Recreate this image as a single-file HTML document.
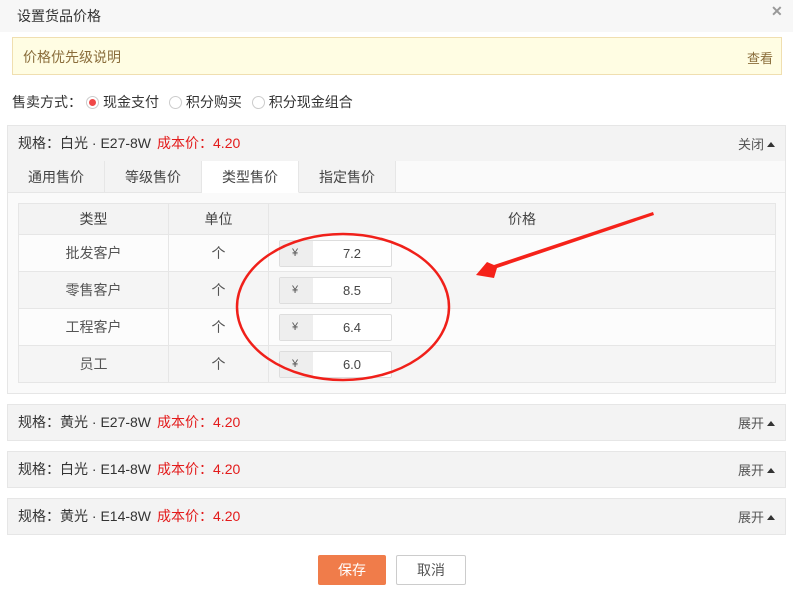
<!DOCTYPE html>
<html><head><meta charset="utf-8"><style>
*{margin:0;padding:0;box-sizing:border-box}
body{width:793px;height:592px;background:#fff;position:relative;overflow:hidden;font-family:"Liberation Sans","Noto Sans CJK SC",sans-serif;font-size:14px;color:#333}
.a{position:absolute}
.hdr{left:0;top:0;width:793px;height:32px;background:#f7f7f7}
.panel{left:7px;width:779px;border:1px solid #e6e6e6;background:#fafafa}
.ph{height:35px;background:#f3f3f3;line-height:35px;padding-left:10px;font-size:14px;color:#333;position:relative}
.ph .r{color:#e31b1b;margin-left:6px}
.ph .t{position:absolute;right:10px;top:1px;font-size:13px;color:#555}
.ph .t:after{content:"";display:inline-block;margin-left:3px;border-left:4px solid transparent;border-right:4px solid transparent;border-bottom:5px solid #333;vertical-align:2px}
.tab{top:161px;height:32px;width:97px;text-align:center;line-height:32px;font-size:14px;color:#444;border-right:1px solid #e6e6e6;border-bottom:1px solid #e6e6e6;background:#f3f3f3}
table{border-collapse:collapse;position:absolute;left:18px;top:203px;width:758px}
td,th{border:1px solid #e6e6e6;text-align:center;font-weight:normal;color:#555;font-size:14px}
th{height:31px;background:#f3f3f3;color:#444}
td{height:37px}
tr.o td{background:#fcfcfc}tr.e td{background:#f5f5f5}
.inp{display:inline-block;width:113px;height:27px;border:1px solid #ddd;border-radius:2px;background:#fff;position:relative;vertical-align:middle;text-align:left}
.inp span{position:absolute;left:0;top:0;width:33px;height:25px;background:#eee;line-height:25px;padding-left:12px;font-size:11px;color:#555}
.inp b{position:absolute;left:33px;right:0;top:0;line-height:25px;text-align:center;font-weight:normal;font-size:13px;color:#444}
.rad{display:inline-block;width:13px;height:13px;border:1px solid #ccc;border-radius:50%;vertical-align:-2px;margin:0 4px 0 6px;background:#fff;position:relative}
</style></head><body>
<div class="a hdr"></div>
<div class="a" style="left:17px;top:6px;font-size:14px;color:#333">设置货品价格</div>
<div class="a" style="left:771px;top:3px;font-size:14px;color:#999;font-weight:bold">✕</div>
<div class="a" style="left:12px;top:37px;width:770px;height:38px;background:#fffde3;border:1px solid #f0dfb0"></div>
<div class="a" style="left:23px;top:47px;color:#8a6d3b;font-size:14px">价格优先级说明</div>
<div class="a" style="left:747px;top:48px;color:#8a6d3b;font-size:13px">查看</div>
<div class="a" style="left:12px;top:92px;font-size:14px;color:#333">售卖方式：<span class="rad" style="margin-left:4px"><i style="position:absolute;left:2px;top:2px;width:7px;height:7px;border-radius:50%;background:#f04848"></i></span>现金支付 <span class="rad"></span>积分购买 <span class="rad"></span>积分现金组合</div>

<div class="a panel" style="top:125px;height:269px">
<div class="ph">规格：白光 · E27-8W<span class="r">成本价：4.20</span><span class="t">关闭</span></div>
</div>
<div class="a tab" style="left:8px">通用售价</div>
<div class="a tab" style="left:105px">等级售价</div>
<div class="a tab" style="left:202px;background:#fff;border-bottom-color:#fff">类型售价</div>
<div class="a tab" style="left:299px">指定售价</div>
<div class="a" style="left:396px;top:192px;width:389px;height:1px;background:#e6e6e6"></div>
<table>
<tr><th style="width:150px">类型</th><th style="width:100px">单位</th><th>价格</th></tr>
<tr class="o"><td>批发客户</td><td>个</td><td style="text-align:left;padding-left:10px"><div class="inp"><span>¥</span><b>7.2</b></div></td></tr>
<tr class="e"><td>零售客户</td><td>个</td><td style="text-align:left;padding-left:10px"><div class="inp"><span>¥</span><b>8.5</b></div></td></tr>
<tr class="o"><td>工程客户</td><td>个</td><td style="text-align:left;padding-left:10px"><div class="inp"><span>¥</span><b>6.4</b></div></td></tr>
<tr class="e"><td>员工</td><td>个</td><td style="text-align:left;padding-left:10px"><div class="inp"><span>¥</span><b>6.0</b></div></td></tr>
</table>

<div class="a panel" style="top:404px;height:37px"><div class="ph">规格：黄光 · E27-8W<span class="r">成本价：4.20</span><span class="t">展开</span></div></div>
<div class="a panel" style="top:451px;height:37px"><div class="ph">规格：白光 · E14-8W<span class="r">成本价：4.20</span><span class="t">展开</span></div></div>
<div class="a panel" style="top:498px;height:37px"><div class="ph">规格：黄光 · E14-8W<span class="r">成本价：4.20</span><span class="t">展开</span></div></div>

<div class="a" style="left:318px;top:555px;width:68px;height:30px;background:#f07c4a;border-radius:2px;color:#fff;text-align:center;line-height:30px;font-size:14px">保存</div>
<div class="a" style="left:396px;top:555px;width:70px;height:30px;border:1px solid #ccc;border-radius:2px;color:#555;text-align:center;line-height:28px;font-size:14px;background:#fff">取消</div>

<svg class="a" style="left:0;top:0" width="793" height="592">
<ellipse cx="343" cy="307" rx="106" ry="73" fill="none" stroke="#f0201a" stroke-width="2.5"/>
<polygon points="653,212 654,215 497,268 494,278 476,275 487,262 494,265" fill="#f5221a"/>
</svg>
</body></html>
